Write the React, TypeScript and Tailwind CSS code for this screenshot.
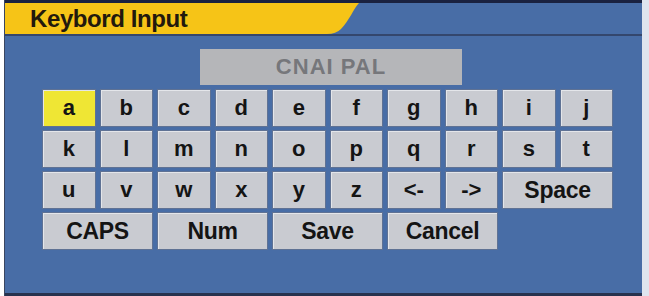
import React from "react";

const rows: string[][] = [
  ["a", "b", "c", "d", "e", "f", "g", "h", "i", "j"],
  ["k", "l", "m", "n", "o", "p", "q", "r", "s", "t"],
];

function Key({ label, span = 1, active = false, big = false }: { label: string; span?: number; active?: boolean; big?: boolean }) {
  return (
    <div
      className={
        (span === 2 ? "col-span-2 " : "") +
        (active ? "bg-[#efe634] " : "bg-[#c9cbd1] ") +
        "flex items-center justify-center border border-[#5f7294] shadow-[inset_1px_1px_0_#e4e6ea] text-[#141414] font-bold " +
        (big ? "text-[23px] tracking-[-0.3px]" : "text-[22px]")
      }
    >
      <span className="leading-none">{label}</span>
    </div>
  );
}

export default function App() {
  return (
    <div className="w-[649px] h-[296px] bg-white flex font-['Liberation_Sans',Arial,sans-serif] overflow-hidden">
      <div className="w-[4px] shrink-0 bg-white" />
      <div className="w-[638px] shrink-0 flex flex-col border-l border-[#3a4660] bg-[#486da6]">
        <div className="h-[3px] bg-[#1a2240]" />
        <div className="h-[31px] flex shadow-[0_2px_0_#34476d]">
          <div className="w-[322px] bg-[#f6c417] flex items-center pl-[25px]">
            <span className="text-[24px] font-bold text-[#22190d] tracking-[-0.4px] leading-none">Keybord Input</span>
          </div>
          <svg width="32" height="31" viewBox="0 0 32 31" className="shrink-0">
            <path d="M0 0 H32 C27 5 22 18 14 26 Q9 31 0 31 Z" fill="#f6c417" />
          </svg>
        </div>
        <div className="flex flex-col pt-[15px] pl-[37px]">
          <div className="ml-[158px] w-[262px] h-[36px] bg-[#b5b6b9] flex items-center justify-center">
            <span className="text-[22px] font-bold text-[#76777b] tracking-[1px] leading-none">CNAI PAL</span>
          </div>
          <div className="mt-[4px] w-[571px] grid grid-cols-10 auto-rows-[38px] gap-x-[4px] gap-y-[3px]">
            {rows[0].map((k, i) => (
              <Key key={k} label={k} active={i === 0} />
            ))}
            {rows[1].map((k) => (
              <Key key={k} label={k} />
            ))}
            {["u", "v", "w", "x", "y", "z", "<-", "->"].map((k) => (
              <Key key={k} label={k} />
            ))}
            <Key label="Space" span={2} big />
            <Key label="CAPS" span={2} big />
            <Key label="Num" span={2} big />
            <Key label="Save" span={2} big />
            <Key label="Cancel" span={2} big />
          </div>
        </div>
        <div className="flex-1" />
        <div className="h-[3px] bg-[#27324e]" />
      </div>
      <div className="flex-1 bg-[#dfe5ee]" />
    </div>
  );
}
